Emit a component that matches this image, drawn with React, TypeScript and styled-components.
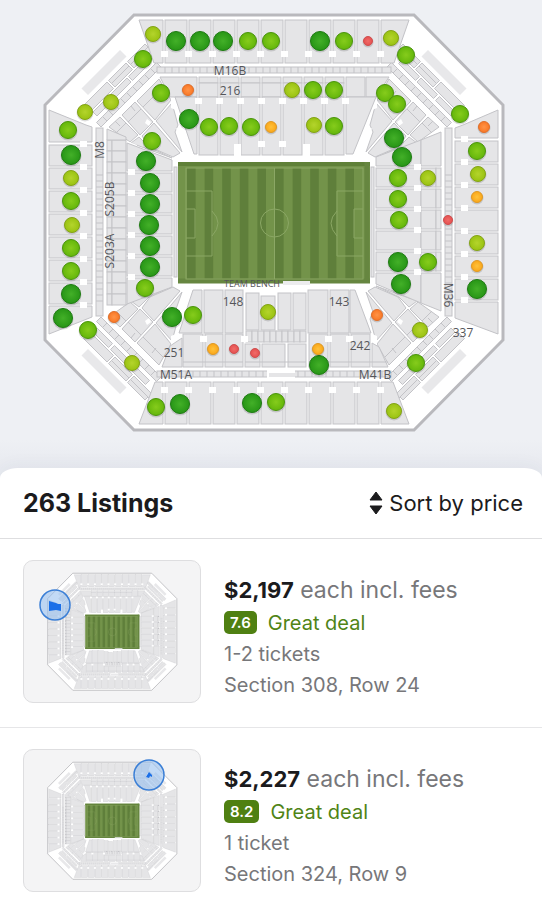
import React from "react";
import styled, { createGlobalStyle } from "styled-components";

const GlobalStyle = createGlobalStyle`
  * { box-sizing: border-box; }
  body {
    margin: 0;
    background: #ffffff;
    color: #1b1b1d;
    font-family: Inter, "Liberation Sans", sans-serif;
  }
`;

/* ---------- geometry of the venue ---------- */

type Box = [x0: number, y0: number, x1: number, y1: number];

const WIDTH = 548;
const HEIGHT = 444;

const step = (from: number, to: number, by: number) => {
  const out: number[] = [];
  for (let v = from; v <= to; v += by) out.push(v);
  return out;
};

const upperColumns = [165, 189, 213, 237, 261, 285, 309, 333, 357];
const sideRows = [145, 168, 191, 214, 237, 260, 283];
const clubRows = [173, 194, 215, 236, 257];
const northColumns = [199, 220, 241, 262, 283, 304, 325];

const blocks: Box[] = [
  ...upperColumns.flatMap((x): Box[] => [
    [x, 20, x + 22, 63],
    [x, 382, x + 22, 424],
  ]),
  ...sideRows.flatMap((y): Box[] => [
    [49, y, 92, y + 21],
    [455, y - 4, 498, y + 17],
  ]),
  ...clubRows.flatMap((y): Box[] => [
    [127, y, 172, y + 19],
    [376, y - 5, 421, y + 14],
    [421, y - 5, 436, y + 14],
    [436, y - 5, 441, y + 14],
  ]),
  ...northColumns.flatMap((x): Box[] => [
    [x, 77, x + 19, 83],
    [x, 83, x + 19, 97],
    [x, 97, x + 19, 155],
  ]),
  ...step(140, 298, 11).flatMap((y): Box[] => [
    [107, y, 112, y + 11],
    [112, y, 126, y + 11],
  ]),
  [346, 77, 365, 97],
  [96, 128, 103, 316],
  [445, 128, 452, 316],
  [157, 67, 391, 73],
  [157, 371, 391, 377],
  [174, 167, 177, 277],
  [371, 167, 374, 277],
  [204, 290, 223, 333],
  [225, 290, 243, 333],
  [246, 293, 259, 330],
  [261, 296, 275, 330],
  [278, 293, 291, 330],
  [293, 293, 306, 330],
  [308, 290, 328, 333],
  [330, 290, 349, 333],
  [183, 334, 203, 367],
  [205, 334, 223, 367],
  [225, 334, 243, 367],
  [245, 344, 260, 367],
  [262, 344, 285, 367],
  [288, 344, 306, 367],
  [309, 334, 328, 367],
  [330, 334, 349, 367],
  [351, 334, 370, 367],
  ...step(246, 300, 6).map((x): Box => [x, 331, x + 6, 342]),
];

const shapes = [
  "139,20 163,20 163,63 154,63",
  "381,20 409,20 394,63 381,63",
  "139,424 163,424 163,382 155,382",
  "381,424 409,424 393,382 381,382",
  "49,110 86,125 92,127 92,142 49,142",
  "498,110 463,125 455,128 455,138 498,138",
  "49,306 92,306 92,317 49,334",
  "498,302 455,302 455,318 498,334",
  "127,143 172,160 172,171 127,171",
  "376,157 421,140 421,166 376,166",
  "421,140 441,132 441,166 421,166",
  "107,129 126,137 126,140 107,140",
  "127,278 172,278 172,287 127,304",
  "376,273 421,273 421,303 376,284",
  "421,273 441,273 441,311 421,303",
  "160,77 197,77 197,97 170,97",
  "175,97 197,97 197,154 194,154",
  "366,77 389,77 376,97 366,97",
  "346,97 376,97 353,154 346,154",
  "193,290 202,290 202,333 179,333",
  "350,290 355,290 371,333 350,333",
  "170,346 182,338 182,367 162,367",
  "372,343 379,347 388,367 372,367",
];

const notches: Array<[number, number]> = [
  ...step(164, 380, 24).flatMap((x): Array<[number, number]> => [
    [x, 54],
    [x, 390],
  ]),
  ...step(144, 306, 23).map((y): [number, number] => [83, y]),
  ...step(139, 301, 23).map((y): [number, number] => [464, y]),
  ...step(172, 277, 21).map((y): [number, number] => [131, y]),
  ...step(167, 272, 21).map((y): [number, number] => [417, y]),
  ...step(198, 345, 21).map((x): [number, number] => [x, 101]),
  [261, 144],
  [282, 144],
  [203, 339],
  [244, 339],
  [328, 339],
  [349, 339],
];

/* A point of a 45 degree corner: c runs towards the pitch, v along the edge. */
const point = (c: number, v: number) => `${(c + v) / 2},${(c - v) / 2}`;
const slab = (c0: number, c1: number, v0: number, v1: number) =>
  [point(c0, v0), point(c0, v1), point(c1, v1), point(c1, v0)].join(" ");

const cornerSlabs = [
  slab(189, 195, 66, 101),
  slab(195, 202, 66, 103),
  slab(189, 195, 28, 63),
  slab(195, 202, 28, 63),
  slab(189, 202, -22, 25),
  slab(205, 213, 52, 86),
  slab(205, 213, 16, 49),
  slab(205, 213, -19, 12),
  ...step(-26, 82, 12).map((v) => slab(219, 228, v, v + 12)),
];

const cornerFan = [
  "137,101 159,79 171,100 155,120",
  "156,121 172,103 178,125 175,132 182,152",
  "122,115 135,102 153,122 140,135",
  "142,136 154,123 180,153 173,157 150,147",
  "109,127 120,117 138,135 130,142",
  "131,143 139,137 149,147 172,158",
];

const mirrors = [
  undefined,
  `translate(${WIDTH} 0) scale(-1 1)`,
  `translate(0 ${HEIGHT}) scale(1 -1)`,
  `translate(${WIDTH} ${HEIGHT}) scale(-1 -1)`,
];

function Corner({ transform }: { transform?: string }) {
  return (
    <g transform={transform}>
      <polygon points={slab(170, 183, -7, 70)} fill="#e8e8ea" />
      <g fill="#e5e5e7" stroke="#c3c3c7" strokeWidth="1">
        {cornerSlabs.map((p) => (
          <polygon key={p} points={p} />
        ))}
        {cornerFan.map((p) => (
          <polygon key={p} points={p} />
        ))}
        <path d="M163 87L143 107M141 109L128 122M126 123L116 133M152 91L156 96M131 106L135 111M115 121L120 126" fill="none" />
      </g>
      <g fill="#ffffff">
        <polygon points="171,97 176,99 176,110 171,108" />
        <polygon points="176,128 182,130 193,155 184,155" />
        <polygon points="127,141 137,145 136,148 126,144" />
        <polygon points="147,119 151,122 149,126 145,123" />
      </g>
    </g>
  );
}

function Pitch() {
  return (
    <g>
      <rect x="178" y="162" width="192" height="121" fill="#73934a" />
      <g fill="#5f7f3b">
        {step(0, 9, 1).map((i) => (
          <rect key={i} x={187 + i * 17.6} y="168" width="8.6" height="111" />
        ))}
      </g>
      <path d="M178 164H370" stroke="#5f8038" strokeWidth="4" />
      <path d="M367 162V283M178 281H370" stroke="#668640" strokeWidth="5" />
      <g fill="none" stroke="#8ba765" strokeWidth="1">
        <rect x="186" y="168" width="177" height="111" />
        <path d="M274.500 168V279M186 191H212V256H186M186 209H195V238H186M363 191H337V256H363M363 209H354V238H363" />
        <circle cx="274.500" cy="223" r="14" />
        <path d="M212 211Q224 223 212 236M337 211Q325 223 337 236" />
      </g>
    </g>
  );
}

function Stadium() {
  return (
    <g>
      <polygon
        points="134,15 414,15 503,105 503,340 414,430 134,430 45,340 45,105"
        fill="#ffffff"
        stroke="#b9b9bd"
        strokeWidth="3"
      />
      {mirrors.map((m, i) => (
        <Corner key={i} transform={m} />
      ))}
      <g fill="#e5e5e7" stroke="#c3c3c7" strokeWidth="1">
        {blocks.map(([x0, y0, x1, y1], i) => (
          <rect key={i} x={x0} y={y0} width={x1 - x0} height={y1 - y0} />
        ))}
        {shapes.map((p) => (
          <polygon key={p} points={p} />
        ))}
      </g>
      <g stroke="#c3c3c7" strokeWidth="1">
        {step(165, 385, 7).map((x) => (
          <path key={x} d={`M${x} 67V73M${x} 371V377`} />
        ))}
        {step(175, 305, 6).map((y) => (
          <path key={y} d={`M96 ${y}H103M445 ${y}H452`} />
        ))}
        <path d="M183 362H243M245 362H306M309 362H388" />
      </g>
      <g fill="#ffffff">
        <rect x="267" y="370" width="28" height="8" />
        <rect x="234" y="144" width="7" height="12" />
        <rect x="303" y="144" width="7" height="12" />
        {notches.map(([x, y]) => (
          <rect key={`${x}-${y}`} x={x - 3} y={y - 3} width="7" height="6" />
        ))}
      </g>
      <rect x="269" y="373" width="26" height="4" fill="#e5e5e7" />
      <Pitch />
      <rect x="283" y="281" width="27" height="4" fill="#ececee" />
    </g>
  );
}

/* ---------- deal markers ---------- */

type Tone = "best" | "good" | "fair" | "amber" | "orange" | "red";

const tones: Record<Tone, { r: number; light: string; base: string; edge: string }> = {
  best: { r: 9.5, light: "#43b028", base: "#2a9818", edge: "#1e7c12" },
  good: { r: 8.5, light: "#86cc1c", base: "#67b80c", edge: "#4b960c" },
  fair: { r: 7.5, light: "#b4d42c", base: "#9cc414", edge: "#84a416" },
  amber: { r: 5.5, light: "#ffc23c", base: "#fba91c", edge: "#df9a26" },
  orange: { r: 5.5, light: "#ff9448", base: "#fa7a28", edge: "#e0702c" },
  red: { r: 4.5, light: "#f06c68", base: "#e65252", edge: "#cf5050" },
};

const markers: Record<Tone, Array<[number, number]>> = {
  fair: [
    [153, 34], [391, 38], [111, 102], [85, 112], [292, 90], [314, 125], [478, 174], [428, 178],
    [477, 243], [420, 330], [394, 411], [71, 178], [72, 225], [132, 363], [268, 312],
  ],
  good: [
    [248, 41], [271, 41], [344, 41], [406, 55], [143, 59], [161, 93], [209, 127], [229, 126],
    [251, 127], [313, 90], [334, 90], [334, 126], [385, 93], [397, 104], [460, 114], [477, 151],
    [398, 178], [398, 199], [399, 220], [428, 262], [416, 363], [68, 130], [71, 201], [71, 248],
    [71, 271], [88, 330], [152, 141], [145, 288], [193, 315], [156, 407], [276, 402],
  ],
  best: [
    [176, 41], [200, 41], [223, 41], [320, 41], [189, 119], [394, 138], [402, 157], [477, 289],
    [398, 262], [401, 284], [71, 155], [71, 294], [63, 318], [146, 161], [150, 183], [150, 204],
    [149, 225], [150, 246], [150, 267], [172, 317], [319, 365], [180, 404], [252, 403],
  ],
  amber: [[271, 127], [477, 197], [477, 266], [213, 349], [318, 349]],
  orange: [[188, 90], [484, 127], [377, 315], [114, 317]],
  red: [[368, 41], [448, 220], [234, 349], [255, 353]],
};

const toneNames = Object.keys(markers) as Tone[];

const sectionLabels: Array<{ text: string; x: number; y: number; turn?: number }> = [
  { text: "M16B", x: 230, y: 75 },
  { text: "216", x: 230, y: 95 },
  { text: "M8", x: 104, y: 150, turn: -90 },
  { text: "S205B", x: 114, y: 199, turn: -90 },
  { text: "S203A", x: 114, y: 251, turn: -90 },
  { text: "M36", x: 444, y: 295, turn: 90 },
  { text: "148", x: 233, y: 306 },
  { text: "143", x: 339, y: 306 },
  { text: "251", x: 174, y: 357 },
  { text: "242", x: 360, y: 350 },
  { text: "337", x: 463, y: 337 },
  { text: "M51A", x: 176, y: 379 },
  { text: "M41B", x: 375, y: 379 },
];

function VenueMap() {
  return (
    <MapDrawing viewBox="0 0 542 468" role="img" aria-label="Seating map">
      <defs>
        {toneNames.map((t) => (
          <radialGradient key={t} id={`tone-${t}`}>
            <stop offset="0" stopColor={tones[t].light} />
            <stop offset="0.9" stopColor={tones[t].base} />
          </radialGradient>
        ))}
      </defs>
      <Stadium />
      {sectionLabels.map(({ text, x, y, turn }) => (
        <SectionLabel key={text} x={x} y={y} transform={turn ? `rotate(${turn} ${x} ${y})` : undefined}>
          {text}
        </SectionLabel>
      ))}
      <BenchLabel x="252" y="287">
        TEAM BENCH
      </BenchLabel>
      {toneNames.map((t) =>
        markers[t].map(([x, y]) => (
          <g key={`${x}-${y}`}>
            <circle cx={x} cy={y + 1} r={tones[t].r + 1} fill="#000000" opacity="0.14" />
            <circle cx={x} cy={y} r={tones[t].r} fill={`url(#tone-${t})`} stroke={tones[t].edge} strokeWidth="1" />
          </g>
        ))
      )}
    </MapDrawing>
  );
}

/* ---------- listings ---------- */

interface Listing {
  id: string;
  price: string;
  score: string;
  verdict: string;
  quantity: string;
  place: string;
  spot: [number, number];
  section: string;
}

const listings: Listing[] = [
  {
    id: "308-24",
    price: "$2,197",
    score: "7.6",
    verdict: "Great deal",
    quantity: "1-2 tickets",
    place: "Section 308, Row 24",
    spot: [31, 44],
    section: "25,40 32,42 34,43 37,43 37,50 32,49 25,50",
  },
  {
    id: "324-9",
    price: "$2,227",
    score: "8.2",
    verdict: "Great deal",
    quantity: "1 ticket",
    place: "Section 324, Row 9",
    spot: [125, 25],
    section: "125,22 128,25 128,27 126,26 125,28 122,27",
  },
];

function Thumbnail({ spot, section }: Pick<Listing, "spot" | "section">) {
  return (
    <Thumb>
      <ThumbDrawing viewBox="0 0 176 141" aria-hidden="true">
        <g transform="translate(11 8) scale(0.282)">
          <Stadium />
        </g>
        <circle cx={spot[0]} cy={spot[1]} r="15" fill="#8fbbef" fillOpacity="0.55" stroke="#3b7fd6" strokeWidth="1.5" />
        <polygon points={section} fill="#1a6fe8" />
      </ThumbDrawing>
    </Thumb>
  );
}

const Page = styled.main`
  min-height: 100vh;
  background: #e8eaf0;
  display: flex;
  flex-direction: column;
`;

const MapArea = styled.section`
  background: linear-gradient(#eef0f4 94%, #e8eaf0);
`;

const MapDrawing = styled.svg`
  display: block;
  width: 100%;
  height: auto;
`;

const SectionLabel = styled.text`
  font: 12px "Open Sans", "Noto Sans", sans-serif;
  fill: #55565a;
  text-anchor: middle;
`;

const BenchLabel = styled(SectionLabel)`
  font-size: 9px;
`;

const Sheet = styled.section`
  flex: 1;
  background: #ffffff;
  border-radius: 18px 18px 0 0 / 10px 10px 0 0;
  box-shadow: 0 -4px 16px rgba(60, 66, 90, 0.04);
`;

const SheetHeader = styled.header`
  display: flex;
  align-items: center;
  justify-content: space-between;
  height: 71px;
  padding: 0 19px 0 23px;
  border-bottom: 1px solid #dedee0;
`;

const Title = styled.h1`
  margin: 0;
  font-size: 25px;
  font-weight: 700;
  line-height: 32px;
`;

const SortButton = styled.button`
  display: flex;
  align-items: center;
  gap: 6px;
  padding: 0;
  border: 0;
  background: none;
  color: #1b1b1d;
  font: 400 22px/32px Inter, sans-serif;
  cursor: pointer;
`;

const Results = styled.ul`
  margin: 0;
  padding: 0;
  list-style: none;
`;

const Result = styled.li`
  border-bottom: 1px solid #e6e6e8;

  &:last-child {
    border-bottom: 0;
  }
`;

const ResultLink = styled.a`
  display: flex;
  gap: 23px;
  padding: 21px 23px 24px;
  color: inherit;
  text-decoration: none;
`;

const Thumb = styled.div`
  flex: 0 0 178px;
  overflow: hidden;
  border: 1px solid #dedee0;
  border-radius: 10px;
  background: #f4f4f5;
`;

const ThumbDrawing = styled.svg`
  display: block;
  width: 100%;
  height: auto;
`;

const Details = styled.div`
  display: flex;
  flex-direction: column;
  padding-top: 14px;
`;

const PriceLine = styled.p`
  margin: 0;
  color: #77777a;
  font-size: 23px;
  line-height: 32px;
`;

const Amount = styled.strong`
  color: #1b1b1d;
  font-size: 22px;
  font-weight: 700;
`;

const DealLine = styled.div`
  display: flex;
  align-items: center;
  gap: 11px;
  height: 33px;
  color: #4f8416;
  font-size: 20px;
`;

const Score = styled.span`
  padding: 0 6px;
  border-radius: 5px;
  background: #4f8012;
  color: #ffffff;
  font-size: 15px;
  font-weight: 600;
  line-height: 23px;
`;

const Meta = styled.p`
  margin: 0;
  color: #77777a;
  font-size: 20px;
  line-height: 31px;
`;

export default function App() {
  return (
    <Page>
      <GlobalStyle />
      <MapArea>
        <VenueMap />
      </MapArea>
      <Sheet>
        <SheetHeader>
          <Title>263 Listings</Title>
          <SortButton type="button">
            <svg width="14" height="24" viewBox="0 0 14 24" aria-hidden="true">
              <path d="M7 1L13 9H1ZM7 23L1 15H13Z" fill="#1b1b1d" stroke="#1b1b1d" strokeLinejoin="round" />
            </svg>
            Sort by price
          </SortButton>
        </SheetHeader>
        <Results>
          {listings.map((item) => (
            <Result key={item.id}>
              <ResultLink href={`#listing-${item.id}`}>
                <Thumbnail spot={item.spot} section={item.section} />
                <Details>
                  <PriceLine>
                    <Amount>{item.price}</Amount> each incl. fees
                  </PriceLine>
                  <DealLine>
                    <Score>{item.score}</Score>
                    <span>{item.verdict}</span>
                  </DealLine>
                  <Meta>{item.quantity}</Meta>
                  <Meta>{item.place}</Meta>
                </Details>
              </ResultLink>
            </Result>
          ))}
        </Results>
      </Sheet>
    </Page>
  );
}
